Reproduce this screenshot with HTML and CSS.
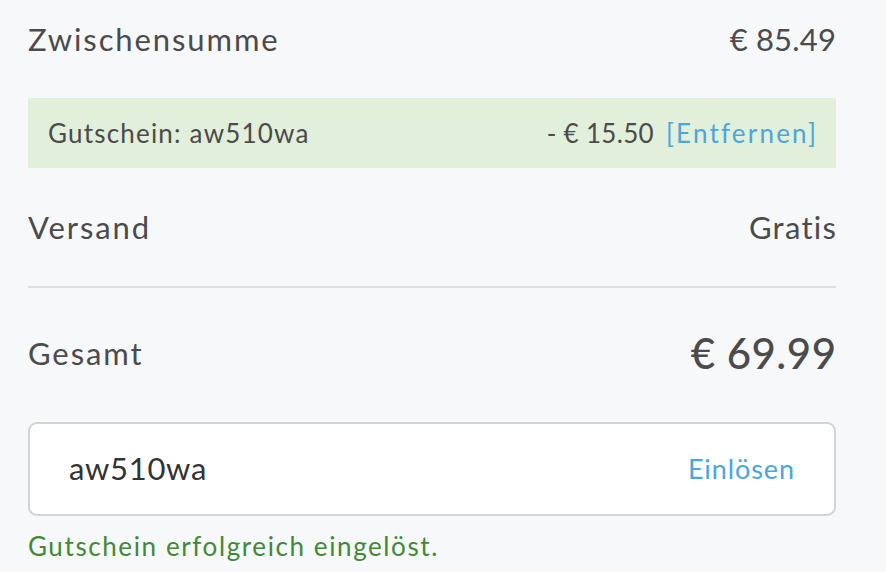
FILE: index.html
```html
<!DOCTYPE html>
<html lang="de">
<head>
<meta charset="utf-8">
<link rel="stylesheet" href="styles.css">
</head>
<body>
<div class="summary">
  <div class="row row-subtotal">
    <span class="label">Zwischensumme</span>
    <span class="value">€ 85.49</span>
  </div>
  <div class="coupon">
    <span class="coupon-label">Gutschein: aw510wa</span>
    <span class="coupon-right"><span class="coupon-amount">- € 15.50</span><a class="link remove" href="#">[Entfernen]</a></span>
  </div>
  <div class="row row-shipping">
    <span class="label">Versand</span>
    <span class="value gratis">Gratis</span>
  </div>
  <div class="divider"></div>
  <div class="row row-total">
    <span class="label">Gesamt</span>
    <span class="total">€ 69.99</span>
  </div>
  <div class="code-box">
    <span class="code">aw510wa</span>
    <a class="link redeem" href="#">Einlösen</a>
  </div>
  <div class="success">Gutschein erfolgreich eingelöst.</div>
</div>
</body>
</html>
```
FILE: styles.css
```css
html, body {
  margin: 0;
  padding: 0;
  background: #f7f8fa;
}
body {
  font-family: "Lato", "Open Sans", sans-serif;
  color: #4b4b4b;
}
.summary {
  display: flex;
  flex-direction: column;
  width: 808px;
  margin-left: 28px;
}
.row {
  display: flex;
  justify-content: space-between;
  align-items: center;
  font-size: 31px;
}
.label {
  letter-spacing: 1.9px;
}
.value {
  letter-spacing: 0.2px;
  margin-right: -0.2px;
}
.gratis {
  letter-spacing: 1.3px;
  margin-right: -1.3px;
}
.row-subtotal {
  height: 77px;
  margin-bottom: 21px;
}
.coupon {
  height: 70px;
  background: #e2efdb;
  display: flex;
  justify-content: space-between;
  align-items: center;
  padding: 0 20px;
  font-size: 26px;
}
.coupon-label {
  letter-spacing: 1.2px;
}
.coupon-right {
  display: flex;
  gap: 12px;
}
.coupon-amount {
  letter-spacing: 0.3px;
}
.remove {
  letter-spacing: 2.2px;
  margin-right: -2.2px;
}
.link {
  color: #4aa6db;
  text-decoration: none;
}
.row-shipping {
  height: 118px;
}
.divider {
  height: 2px;
  background: #dcdee2;
}
.row-total {
  height: 130px;
}
.total {
  font-size: 42px;
  font-weight: 500;
  letter-spacing: 0.5px;
  margin-right: -0.5px;
}
.code-box {
  margin-top: 4px;
  height: 94px;
  box-sizing: border-box;
  background: #fff;
  border: 2px solid #d2d3d6;
  border-radius: 9px;
  display: flex;
  justify-content: space-between;
  align-items: center;
  padding: 0 40px 2px 39px;
}
.code {
  font-size: 31px;
  color: #333;
  letter-spacing: 0.7px;
}
.redeem {
  font-size: 27px;
  letter-spacing: 0.9px;
  margin-right: -0.9px;
}
.success {
  margin-top: 15px;
  font-size: 26px;
  line-height: 30px;
  color: #3f8a35;
  letter-spacing: 1.6px;
}
```
